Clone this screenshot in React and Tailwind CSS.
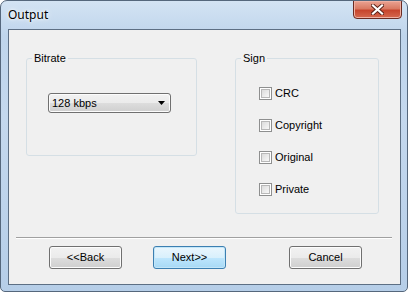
import React from 'react';

const ui = { fontFamily: '"Liberation Sans", Arial, sans-serif' };

const CheckRow = ({ label }) => (
  <label className="flex items-center h-[13px] text-[11px] text-black leading-[13px]">
    <span className="w-[13px] h-[13px] border border-[#8e8f8f] bg-white p-px">
      <span className="block w-full h-full border border-[#b8b8b8] bg-gradient-to-br from-[#dcdcdc] to-[#f8f8f8]" />
    </span>
    <span className="ml-[3px]">{label}</span>
  </label>
);

const WinButton = ({ children, focused, className = '' }) => (
  <button
    className={
      'w-[73px] h-[23px] rounded-[3px] border text-[11px] text-black ' +
      (focused
        ? 'border-[#3c7fb1] bg-[linear-gradient(#eaf6fd_0%,#d9f0fc_50%,#bee6fd_51%,#a7d9f5_100%)] shadow-[inset_0_0_0_1px_#c3e6f8] '
        : 'border-[#707070] bg-[linear-gradient(#f2f2f2_0%,#ebebeb_50%,#dddddd_51%,#cfcfcf_100%)] shadow-[inset_0_0_0_1px_#fcfcfc] ') +
      className
    }
    style={ui}
  >
    {children}
  </button>
);

export default function App() {
  return (
    <div className="w-[408px] h-[292px] flex flex-col rounded-t-[7px] rounded-b-[5px] border border-[#55677c] bg-[linear-gradient(180deg,#d3e3f3_0%,#bfd5ec_12%,#c4d8ee_40%,#b6cee8_100%)] overflow-hidden">
      {/* title bar */}
      <div className="h-[28px] flex items-start justify-between">
        <div
          className="pl-[7px] pt-[5px] text-[12px] text-black"
          style={{ fontFamily: '"Segoe UI", "Noto Sans", sans-serif', textShadow: '0 0 6px #fff, 0 0 3px #fff' }}
        >
          Output
        </div>
        <div className="mr-[5px] w-[49px] h-[19px] -mt-px rounded-b-[4px] border border-[#6b2b22] bg-[linear-gradient(#eba393_0%,#d97a63_45%,#c7452d_55%,#d5694f_100%)] shadow-[inset_0_0_0_1px_#efb0a2] flex items-center justify-center">
          <svg width="13" height="11" viewBox="0 0 13 11">
            <path d="M2 1.5 L11 9.5 M11 1.5 L2 9.5" stroke="#5a2118" strokeWidth="4" strokeLinecap="square" />
            <path d="M2 1.5 L11 9.5 M11 1.5 L2 9.5" stroke="#ffffff" strokeWidth="2.2" strokeLinecap="square" />
          </svg>
        </div>
      </div>

      {/* client area */}
      <div className="ml-[7px] w-[393px] h-[256px] border border-[#5d6f84] bg-[#f0f0f0] flex flex-col" style={ui}>
        <div className="flex items-start mt-[22px] ml-[17px]">
          <fieldset className="w-[171px] h-[104px] border border-[#d5dfe5] rounded-[3px]">
            <legend className="ml-[5px] px-[2px] text-[11px] leading-[13px] text-black">Bitrate</legend>
            <div className="pt-[28px] pl-[21px]">
              <div className="w-[123px] h-[20px] rounded-[3px] border border-[#707070] bg-[linear-gradient(#f2f2f2_0%,#ebebeb_50%,#dddddd_51%,#cfcfcf_100%)] shadow-[inset_0_0_0_1px_#fcfcfc] flex items-center justify-between pl-[3px] pr-[5px] text-[11px] text-black">
                <span>128 kbps</span>
                <svg width="7" height="4" viewBox="0 0 7 4">
                  <path d="M0 0 H7 L3.5 4 Z" fill="#000" />
                </svg>
              </div>
            </div>
          </fieldset>

          <fieldset className="ml-[38px] w-[144px] h-[162px] border border-[#d5dfe5] rounded-[3px]">
            <legend className="ml-[5px] px-[2px] text-[11px] leading-[13px] text-black">Sign</legend>
            <div className="pt-[22px] pl-[23px] flex flex-col gap-[19px]">
              <CheckRow label="CRC" />
              <CheckRow label="Copyright" />
              <CheckRow label="Original" />
              <CheckRow label="Private" />
            </div>
          </fieldset>
        </div>

        <div className="mt-[23px] ml-[7px] mr-[8px] h-[2px] border-t border-[#a0a0a0] border-b border-b-white" />

        <div className="mt-[7px] flex">
          <WinButton className="ml-[40px]">&lt;&lt;Back</WinButton>
          <WinButton focused className="ml-[31px]">Next&gt;&gt;</WinButton>
          <WinButton className="ml-[63px]">Cancel</WinButton>
        </div>
      </div>
    </div>
  );
}
